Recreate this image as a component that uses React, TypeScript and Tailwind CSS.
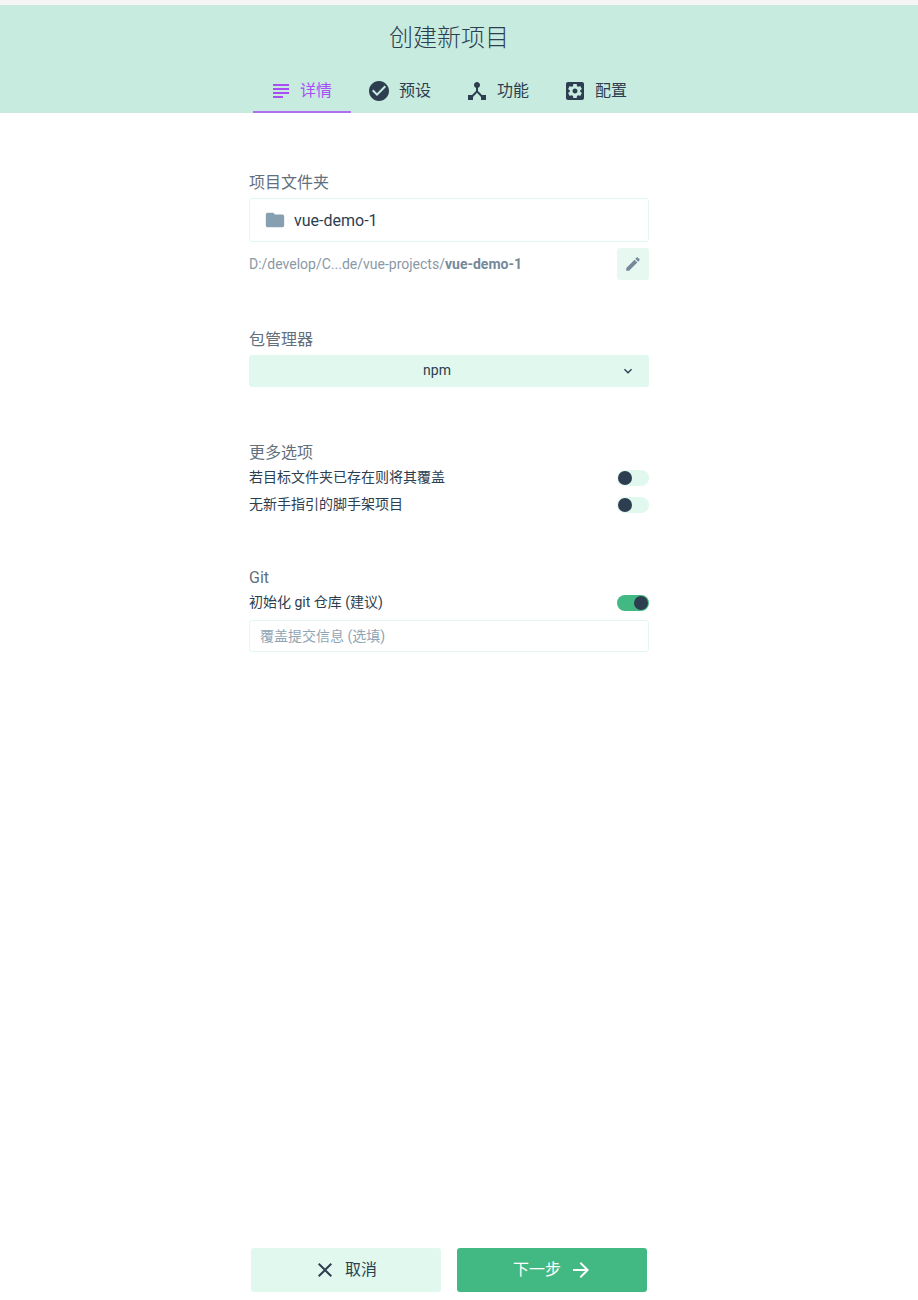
const FONT = "font-['Roboto','Noto_Sans_CJK_SC',sans-serif]";

function Icon({ d, size = 24, className = "" }: { d: string; size?: number; className?: string }) {
  return (
    <svg width={size} height={size} viewBox="0 0 24 24" fill="currentColor" className={className}>
      <path d={d} />
    </svg>
  );
}

const icons = {
  subject: "M14 17H4v2h10v-2zm6-8H4v2h16V9zM4 15h16v-2H4v2zM4 5v2h16V5H4z",
  check:
    "M12 2C6.48 2 2 6.48 2 12s4.48 10 10 10 10-4.48 10-10S17.52 2 12 2zm-2 15l-5-5 1.41-1.41L10 14.17l7.59-7.59L19 8l-9 9z",
  device:
    "M17 16l-4-4V8.82C14.16 8.4 15 7.3 15 6c0-1.66-1.34-3-3-3S9 4.34 9 6c0 1.3.84 2.4 2 2.82V12l-4 4H3v5h5v-3.05l4-4.2 4 4.2V21h5v-5h-4z",
  settings:
    "M19 3H5c-1.11 0-2 .9-2 2v14c0 1.1.89 2 2 2h14c1.11 0 2-.9 2-2V5c0-1.1-.89-2-2-2zm-1.75 9c0 .23-.02.46-.05.68l1.48 1.16c.13.11.17.3.08.45l-1.4 2.42c-.09.15-.27.21-.43.15l-1.74-.7c-.36.28-.76.51-1.18.69l-.26 1.85c-.03.17-.18.3-.35.3h-2.8c-.17 0-.32-.13-.35-.29l-.26-1.85c-.43-.18-.82-.41-1.18-.69l-1.74.7c-.16.06-.34 0-.43-.15l-1.4-2.42c-.09-.15-.05-.34.08-.45l1.48-1.16c-.03-.23-.05-.46-.05-.69 0-.23.02-.46.05-.68l-1.48-1.16c-.13-.11-.17-.3-.08-.45l1.4-2.42c.09-.15.27-.21.43-.15l1.74.7c.36-.28.76-.51 1.18-.69l.26-1.85c.03-.17.18-.3.35-.3h2.8c.17 0 .32.13.35.29l.26 1.85c.43.18.82.41 1.18.69l1.74-.7c.16-.06.34 0 .43.15l1.4 2.42c.09.15.05.34-.08.45l-1.48 1.16c.03.23.05.46.05.69zM12 9.5c-1.38 0-2.5 1.12-2.5 2.5s1.12 2.5 2.5 2.5 2.5-1.12 2.5-2.5-1.12-2.5-2.5-2.5z",
  folder: "M10 4H4c-1.1 0-1.99.9-1.99 2L2 18c0 1.1.9 2 2 2h16c1.1 0 2-.9 2-2V8c0-1.1-.9-2-2-2h-8l-2-2z",
  edit: "M3 17.25V21h3.75L17.81 9.94l-3.75-3.75L3 17.25zM20.71 7.04c.39-.39.39-1.02 0-1.41l-2.34-2.34c-.39-.39-1.02-.39-1.41 0l-1.83 1.83 3.75 3.75 1.83-1.83z",
  chevron: "M7.41 8.59L12 13.17l4.59-4.58L18 10l-6 6-6-6 1.41-1.41z",
  close: "M19 6.41L17.59 5 12 10.59 6.41 5 5 6.41 10.59 12 5 17.59 6.41 19 12 13.41 17.59 19 19 17.59 13.41 12z",
  arrow: "M12 4l-1.41 1.41L16.17 11H4v2h12.17l-5.58 5.59L12 20l8-8z",
};

function Tab({ label, icon, active }: { label: string; icon: string; active?: boolean }) {
  return (
    <div
      className={
        active
          ? "w-[98px] h-[44px] pt-[2px] pr-[3px] flex items-center justify-center gap-[7px] border-b-2 border-[#b06ef5] text-[#a74ff5]"
          : "w-[98px] h-[44px] pt-[2px] pr-[2px] flex items-center justify-center gap-[8px] border-b-2 border-transparent text-[#2c3e50]"
      }
    >
      <Icon d={icon} />
      <span className="text-[16px] leading-5">{label}</span>
    </div>
  );
}

function Toggle({ on }: { on?: boolean }) {
  return (
    <div
      className={
        on
          ? "w-[32px] h-[16px] px-[1px] rounded-full bg-[#42b983] flex items-center justify-end"
          : "w-[32px] h-[16px] px-[1px] rounded-full bg-[#e0f8ee] flex items-center justify-start"
      }
    >
      <div className="w-[14px] h-[14px] rounded-full bg-[#2c3e50]" />
    </div>
  );
}

function SwitchRow({ label, on }: { label: string; on?: boolean }) {
  return (
    <div className="h-[27px] flex items-center justify-between text-[14px] text-[#2c3e50]">
      <span>{label}</span>
      <Toggle on={on} />
    </div>
  );
}

export default function App() {
  return (
    <div className={`${FONT} w-[918px] h-[1300px] bg-white flex flex-col`}>
      <div className="h-[5px] bg-[#f5f5f5]" />

      {/* Header */}
      <div className="h-[108px] bg-[#c8ebdf]">
        <div className="w-[898px] flex flex-col items-center">
          <h1 className="pt-[16px] h-[64px] text-[24px] leading-[34px] font-light text-[#2c3e50]">创建新项目</h1>
          <div className="flex">
            <Tab label="详情" icon={icons.subject} active />
            <Tab label="预设" icon={icons.check} />
            <Tab label="功能" icon={icons.device} />
            <Tab label="配置" icon={icons.settings} />
          </div>
        </div>
      </div>

      {/* Form */}
      <div className="w-[898px] flex-1 flex flex-col items-center">
        <div className="w-[400px] pt-[58px]">
          <div className="text-[16px] leading-[24px] text-[#626f7c]">项目文件夹</div>
          <div className="mt-[3px] h-[44px] rounded-[3px] border border-[#e0f8ee] flex items-center pl-[14px] gap-[8px] text-[#2c3e50]">
            <Icon d={icons.folder} size={22} className="text-[#86a0b2]" />
            <span className="pt-[1px] text-[16px]">vue-demo-1</span>
          </div>
          <div className="mt-[6px] flex items-center justify-between">
            <span className="text-[14px] text-[#8a98a5]">
              D:/develop/C...de/vue-projects/<b className="font-bold text-[#76899a]">vue-demo-1</b>
            </span>
            <button className="w-[32px] h-[32px] rounded-[3px] bg-[#e7f8f1] flex items-center justify-center text-[#76899a]">
              <Icon d={icons.edit} size={18} />
            </button>
          </div>

          <div className="mt-[48px] text-[16px] leading-[24px] text-[#626f7c]">包管理器</div>
          <div className="mt-[3px] relative h-[32px] pr-[24px] pb-[2px] rounded-[3px] bg-[#e0f8ee] flex items-center justify-center text-[14px] text-[#2c3e50]">
            npm
            <Icon d={icons.chevron} size={16} className="absolute right-[13px] top-[8px]" />
          </div>

          <div className="mt-[55px] text-[16px] leading-[22px] text-[#626f7c]">更多选项</div>
          <SwitchRow label="若目标文件夹已存在则将其覆盖" />
          <SwitchRow label="无新手指引的脚手架项目" />

          <div className="mt-[49px] text-[16px] leading-[22px] text-[#626f7c]">Git</div>
          <SwitchRow label="初始化 git 仓库 (建议)" on />
          <div className="mt-[4px] h-[32px] rounded-[3px] border border-[#e0f8ee] flex items-center pl-[10px] text-[14px] text-[#8fa5b4]">
            覆盖提交信息 (选填)
          </div>
        </div>
      </div>

      {/* Footer */}
      <div className="w-[898px] h-[52px] flex justify-center gap-[16px] text-[16px]">
        <button className="w-[190px] h-[44px] pr-[2px] rounded-[3px] bg-[#e0f8ee] flex items-center justify-center gap-[8px] text-[#2c3e50]">
          <Icon d={icons.close} />
          取消
        </button>
        <button className="w-[190px] h-[44px] pl-[2px] rounded-[3px] bg-[#42b983] flex items-center justify-center gap-[8px] text-white">
          下一步
          <Icon d={icons.arrow} />
        </button>
      </div>
    </div>
  );
}
